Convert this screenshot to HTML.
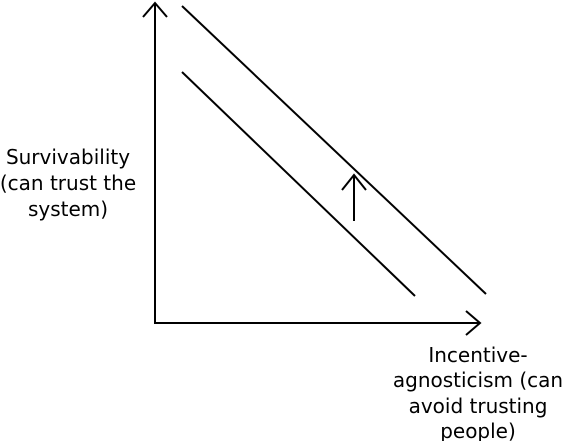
<!DOCTYPE html>
<html><head><style>
html,body{margin:0;padding:0;background:#fff;width:563px;height:441px;overflow:hidden}
</style></head><body>
<svg width="563" height="441" viewBox="0 0 563 441" xmlns="http://www.w3.org/2000/svg" style="display:block">
<g stroke="#000" stroke-width="2" fill="none">
<line x1="155" y1="3" x2="155" y2="324"/>
<polyline points="143,17 155,3 167,17"/>
<line x1="154" y1="323" x2="480" y2="323"/>
<polyline points="466,311 480,323 466,335"/>
<line x1="182" y1="6" x2="486" y2="294"/>
<line x1="182" y1="72" x2="415" y2="296"/>
<line x1="354" y1="175" x2="354" y2="221"/>
<polyline points="342,190 354,175 366,190"/>
</g>
<g font-family="DejaVu Sans, sans-serif" font-size="20" text-anchor="middle" fill="#000">
<text x="68" y="164">Survivability</text>
<text x="68" y="190">(can trust the</text>
<text x="68" y="216">system)</text>
<text x="478" y="362">Incentive-</text>
<text x="478" y="387">agnosticism (can</text>
<text x="478" y="413">avoid trusting</text>
<text x="478" y="438">people)</text>
</g>
</svg>
</body></html>
